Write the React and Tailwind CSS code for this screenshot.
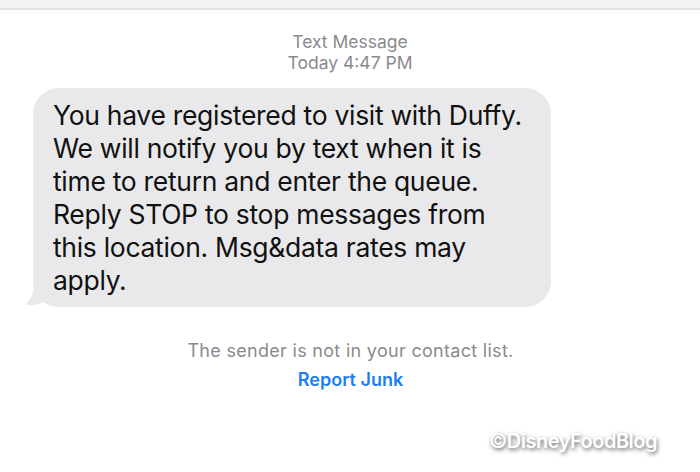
import React from "react";

const lines = [
  "You have registered to visit with Duffy.",
  "We will notify you by text when it is",
  "time to return and enter the queue.",
  "Reply STOP to stop messages from",
  "this location. Msg&data rates may",
  "apply.",
];

const font = { fontFamily: "Inter, 'Noto Sans', sans-serif" };

export default function App() {
  return (
    <div className="w-[700px] h-[472px] bg-white overflow-hidden relative" style={font}>
      <div className="h-[10px] bg-[#f3f3f3] border-b-2 border-[#e2e2e2]" />

      <div className="flex flex-col items-center pt-[21px] text-[17.5px] leading-[21px] text-[#8a8a8e]">
        <span>Text Message</span>
        <span>Today 4:47 PM</span>
      </div>

      <div className="relative ml-[33px] mt-[15px] w-[518px]">
        <svg
          className="absolute left-[-8px] bottom-0"
          width="40"
          height="30"
          viewBox="0 0 40 30"
        >
          <path d="M9 0 C 10 14, 7 22, 0 27.5 C 9 29.5, 17 27, 23 22 L 40 22 L 40 0 Z" fill="#e9e9eb" />
        </svg>
        <div className="relative bg-[#e9e9eb] rounded-[26px] pl-[20px] pr-[16px] pt-[11px] pb-[10px] text-[26.5px] leading-[33px] text-[#111] tracking-[-0.3px] whitespace-nowrap">
          {lines.map((l) => (
            <div key={l}>{l}</div>
          ))}
        </div>
      </div>

      <div className="flex flex-col items-center mt-[33px] pl-[1px]">
        <span className="text-[18px] leading-[22px] text-[#8a8a8e] tracking-[0.3px]">
          The sender is not in your contact list.
        </span>
        <span className="mt-[7px] text-[18px] leading-[22px] font-semibold text-[#1a7ef2]">
          Report Junk
        </span>
      </div>

      <div
        className="absolute left-[489px] top-[426px] text-[20px] font-semibold text-white tracking-[-0.5px]"
        style={{ textShadow: "1px 2px 4px rgba(0,0,0,0.6)" }}
      >
        ©DisneyFoodBlog
      </div>
    </div>
  );
}
